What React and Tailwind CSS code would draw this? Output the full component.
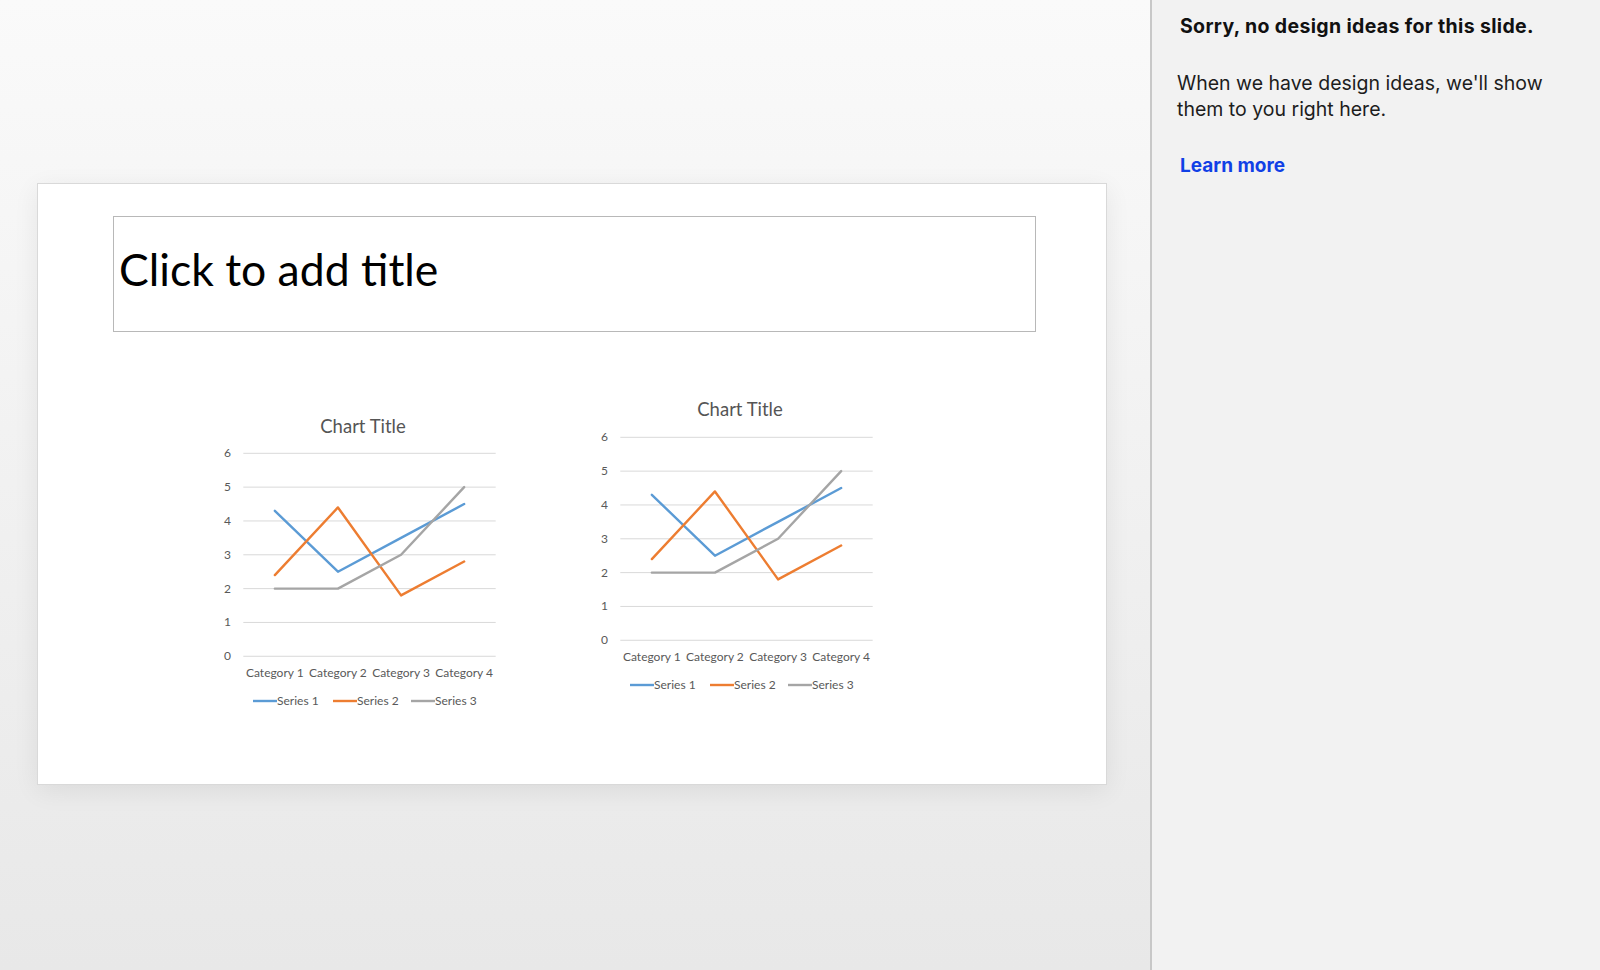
import React from "react";

const SERIES = [
  { name: "Series 1", color: "#5b9bd5", values: [4.3, 2.5, 3.5, 4.5] },
  { name: "Series 2", color: "#ed7d31", values: [2.4, 4.4, 1.8, 2.8] },
  { name: "Series 3", color: "#a5a5a5", values: [2, 2, 3, 5] },
];

function Chart({ className, titleY = 32 }) {
  const x0 = 33.3;
  const x1 = 285.7;
  const yTop = 52.3;
  const step = 33.83;
  const cw = (x1 - x0) / 4;
  const cx = (i) => x0 + cw * (i + 0.5);
  const yv = (v) => yTop + (6 - v) * step;
  const legendX = [43, 123, 201];
  return (
    <svg
      width="300"
      height="312"
      viewBox="0 0 300 312"
      className={"shrink-0 font-['Lato','Open_Sans',sans-serif] " + className}
    >
      <text x="153" y={titleY} textAnchor="middle" fontSize="18.5" fill="#555555">
        Chart Title
      </text>
      {[0, 1, 2, 3, 4, 5, 6].map((v) => (
        <g key={v}>
          <line x1={x0} x2={x1} y1={yv(v)} y2={yv(v)} stroke="#d9d9d9" strokeWidth="1" />
          <text x="21" y={yv(v) + 4} textAnchor="end" fontSize="12" fill="#595959">
            {v}
          </text>
        </g>
      ))}
      {[0, 1, 2, 3].map((i) => (
        <text key={i} x={cx(i)} y="276" textAnchor="middle" fontSize="12" fill="#595959">
          Category {i + 1}
        </text>
      ))}
      {SERIES.map((s) => (
        <polyline
          key={s.name}
          points={s.values.map((v, i) => `${cx(i)},${yv(v)}`).join(" ")}
          fill="none"
          stroke={s.color}
          strokeWidth="2.4"
          strokeLinejoin="round"
          strokeLinecap="round"
        />
      ))}
      {SERIES.map((s, i) => (
        <g key={s.name}>
          <line x1={legendX[i]} x2={legendX[i] + 24} y1="300" y2="300" stroke={s.color} strokeWidth="2.4" />
          <text x={legendX[i] + 24} y="304" fontSize="12" fill="#595959">
            {s.name}
          </text>
        </g>
      ))}
    </svg>
  );
}

export default function App() {
  return (
    <div className="flex h-[970px] w-[1600px] overflow-hidden">
      <main className="flex h-full w-[1150px] shrink-0 items-start bg-gradient-to-b from-[#fafafa] to-[#e8e8e8] pl-[37px] pt-[183px]">
        <div className="h-[602px] w-[1070px] border border-[#d9d9d9] bg-white pt-[32px] shadow-[0_6px_24px_rgba(0,0,0,0.07)]">
          <div className="ml-[75px] flex h-[116px] w-[923px] items-center border border-[#b8b8b8] pb-[10px] pl-[5px]">
            <span className="font-['Lato','Open_Sans',sans-serif] text-[44.5px] leading-none text-black">
              Click to add title
            </span>
          </div>
          <div className="flex items-start pl-[172px]">
            <Chart className="mt-[69px]" />
            <Chart className="ml-[77px] mt-[53px]" titleY={31} />
          </div>
        </div>
      </main>
      <div className="w-[2px] shrink-0 bg-[#c8c8c8]" />
      <aside className="flex flex-1 flex-col bg-[#f2f2f2] font-['Inter','Liberation_Sans',sans-serif]">
        <h2 className="ml-[28px] mt-[14px] text-[19.5px] font-bold leading-[24px] tracking-[0.35px] text-[#111111]">
          Sorry, no design ideas for this slide.
        </h2>
        <p className="ml-[25px] mt-[32px] w-[390px] text-[19.5px] leading-[26px] text-[#1d1d1d]">
          When we have design ideas, we'll show them to you right here.
        </p>
        <a className="ml-[28px] mt-[32px] text-[19px] font-bold leading-[24px] text-[#1040e6]">
          Learn more
        </a>
      </aside>
    </div>
  );
}
